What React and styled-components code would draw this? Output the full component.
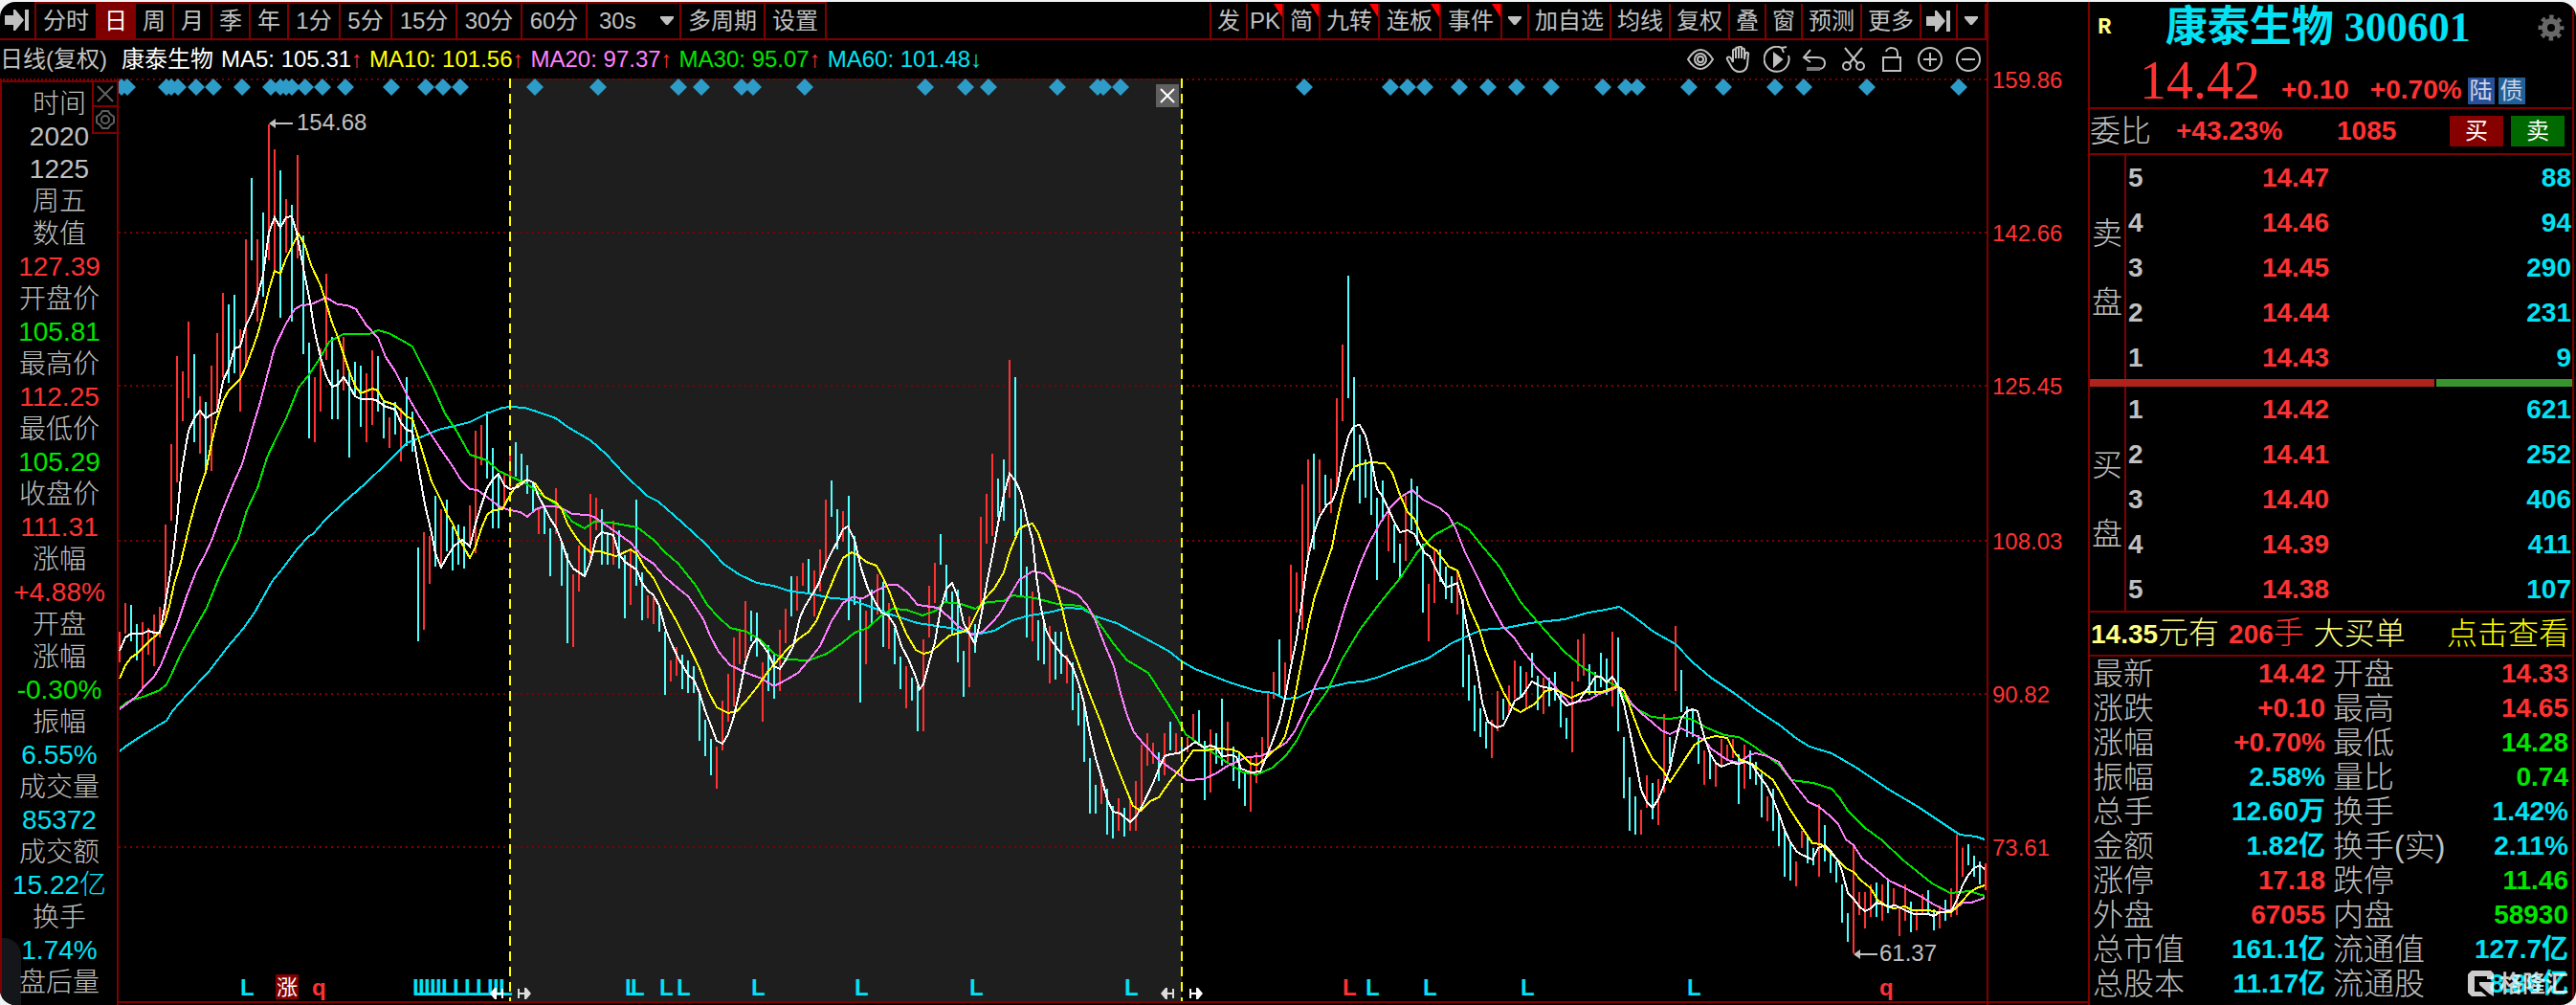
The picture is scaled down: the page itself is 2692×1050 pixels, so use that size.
import React from "react";
import styled, { createGlobalStyle } from "styled-components";

const RED = "#ff3232";
const GREEN = "#00e600";
const CYAN = "#02e2f4";
const SILVER = "#c0c0c0";
const LINE = "#800000";

const leftTools = [
  { label: "分时", w: 64 },
  { label: "日", w: 40, active: true },
  { label: "周", w: 40 },
  { label: "月", w: 40 },
  { label: "季", w: 40 },
  { label: "年", w: 40 },
  { label: "1分", w: 54 },
  { label: "5分", w: 54 },
  { label: "15分", w: 68 },
  { label: "30分", w: 68 },
  { label: "60分", w: 68 },
];

const rightTools = [
  { label: "发", w: 38 },
  { label: "PK", w: 38, mark: true },
  { label: "简", w: 38, mark: true },
  { label: "九转", w: 62, mark: true },
  { label: "连板", w: 64, mark: true },
  { label: "事件", w: 64, mark: true },
  { icon: "down", name: "更多事件", w: 28 },
  { label: "加自选", w: 86 },
  { label: "均线", w: 62 },
  { label: "复权", w: 62 },
  { label: "叠", w: 38 },
  { label: "窗", w: 38 },
  { label: "预测", w: 62 },
  { label: "更多", w: 62 },
  { icon: "end", name: "隐藏", w: 38 },
  { icon: "down", name: "菜单", w: 30 },
];

const averages = [
  { text: "MA5: 105.31", color: "#ffffff", up: true },
  { text: "MA10: 101.56", color: "#ffff00", up: true },
  { text: "MA20: 97.37", color: "#ff80ff", up: true },
  { text: "MA30: 95.07", color: GREEN, up: true },
  { text: "MA60: 101.48", color: CYAN, up: false },
];

const dayInfo = [
  ["时间"],
  ["2020"],
  ["1225"],
  ["周五"],
  ["数值"],
  ["127.39", RED],
  ["开盘价"],
  ["105.81", GREEN],
  ["最高价"],
  ["112.25", RED],
  ["最低价"],
  ["105.29", GREEN],
  ["收盘价"],
  ["111.31", RED],
  ["涨幅"],
  ["+4.88%", RED],
  ["开盘"],
  ["涨幅"],
  ["-0.30%", GREEN],
  ["振幅"],
  ["6.55%", CYAN],
  ["成交量"],
  ["85372", CYAN],
  ["成交额"],
  ["15.22亿", CYAN],
  ["换手"],
  ["1.74%", CYAN],
  ["盘后量"],
];

const sells = [
  ["5", "14.47", "88"],
  ["4", "14.46", "94"],
  ["3", "14.45", "290"],
  ["2", "14.44", "231"],
  ["1", "14.43", "9"],
];

const buys = [
  ["1", "14.42", "621"],
  ["2", "14.41", "252"],
  ["3", "14.40", "406"],
  ["4", "14.39", "411"],
  ["5", "14.38", "107"],
];

const stats = [
  ["最新", "14.42", RED, "开盘", "14.33", RED],
  ["涨跌", "+0.10", RED, "最高", "14.65", RED],
  ["涨幅", "+0.70%", RED, "最低", "14.28", GREEN],
  ["振幅", "2.58%", CYAN, "量比", "0.74", GREEN],
  ["总手", "12.60万", CYAN, "换手", "1.42%", CYAN],
  ["金额", "1.82亿", CYAN, "换手(实)", "2.11%", CYAN],
  ["涨停", "17.18", RED, "跌停", "11.46", GREEN],
  ["外盘", "67055", RED, "内盘", "58930", GREEN],
  ["总市值", "161.1亿", CYAN, "流通值", "127.7亿", CYAN],
  ["总股本", "11.17亿", CYAN, "流通股", "8.86亿", CYAN],
];

const scale = ["159.86", "142.66", "125.45", "108.03", "90.82", "73.61"];

// one entry per bar: r = up, c = down, then top-bottom
const FIRST_X = 125;
const STEP = 6;
const bars = `
r660-692 r630-662 c632-670 c652-690 r650-718 r656-684 r642-696 r634-666 r548-646 r464-544
r372-504 r388-440 r336-416 c370-462 r414-474 c420-490 r382-492 r348-430 r306-394 c318-400
c308-390 r344-430 r250-382 c186-272 r250-336 c222-310 r130-272 r156-282 c178-332 r208-264
c214-336 r162-270 c246-370 c358-458 r394-462 r364-430 r286-376 c352-438 c386-438 r352-408
c386-478 c378-414 c382-446 r390-462 r366-444 c372-430 c420-458 r436-468 c420-454 r426-482
c394-466 c430-472 c572-670 r556-658 r560-610 c518-592 r532-590 c522-576 c550-596 c548-590
c550-594 r528-570 r450-578 r444-486 c430-500 c468-552 c496-552 r496-530 r470-510 c462-498
c474-504 c486-516 c504-534 r532-558 c530-558 c552-602 r510-558 c566-612 c578-672 r600-676
r570-618 c570-602 r516-586 r520-554 c532-590 c556-590 r544-590 c554-594 c580-646 r574-632
c522-612 c598-648 r622-646 r624-652 c632-660 c660-726 r690-712 r676-706 c684-720 c690-724
c696-724 c722-774 c752-790 c772-810 r780-824 r732-784 r704-754 r666-738 r658-694 r628-688
c638-670 c640-686 r692-754 c674-722 c684-730 r658-722 r636-672 c602-644 r602-638 r588-612
c584-620 r596-644 r574-618 r522-594 c502-540 c532-574 r534-566 c518-648 c560-632 c626-734
r638-694 c616-652 r600-642 c608-676 r630-678 c656-694 c686-720 r696-740 c708-732 c716-764
r668-764 r612-666 r588-630 c558-590 c590-630 c618-662 c616-692 c680-728 r644-718 c652-682
r540-636 r516-568 r474-560 c500-540 c480-544 r376-520 c394-560 c532-622 c592-666 r618-670
c648-690 c652-694 r654-714 c660-710 c660-704 r684-714 c692-742 c724-758 c738-796 c792-850
c820-850 r814-840 c824-872 c842-876 r834-868 c844-874 r836-868 r816-868 r778-848 r766-800
r776-798 c786-816 r766-810 c754-784 r766-786 c772-790 r770-786 r746-772 c742-778 c774-836
r762-828 c766-798 c730-800 r754-798 c780-816 c786-824 c808-842 r792-848 r786-818 r770-800
r724-782 r702-730 c668-728 r692-726 r590-690 r598-640 r506-658 r480-580 c474-574 r480-536
c496-528 r500-536 r416-512 r360-440 c288-416 c394-502 c454-526 c480-520 c482-538 c520-606
c502-544 r532-576 c548-588 c568-604 r518-586 c500-554 c508-570 c568-640 r610-670 r574-630
c574-608 c592-626 c602-630 r596-642 c626-718 c684-732 c716-764 c740-770 c754-782 r752-792
r722-764 c730-752 r716-746 r690-730 c696-728 r702-740 c682-708 c706-742 r708-746 c708-738
c702-732 c722-760 c750-772 r712-786 r668-712 r662-706 c694-726 c702-726 c682-718 c688-726
r660-738 c666-764 c770-834 c812-868 c832-872 r846-872 r810-844 c818-856 r814-862 r746-828
c770-798 r654-722 c700-744 c738-770 c740-770 c768-798 r784-820 c788-814 r796-822 r772-800
r778-794 r772-792 c788-840 r778-824 c784-814 c796-820 c808-854 r832-858 c824-868 c852-884
c868-916 c880-920 r900-926 r868-886 c872-902 c886-904 r840-916 c862-900 c890-912 c900-922
c924-964 c954-984 r884-996 r932-956 r932-970 r924-958 c922-958 r924-962 c920-954 r928-946
r948-978 r924-962 c942-974 r952-972 r934-954 c930-954 c950-972 r946-970 c940-962 r928-958
r872-956 r886-916 c882-904 c894-916 c900-924 r902-930`
  .trim()
  .split(/\s+/)
  .map((item, i) => {
    const [top, bottom] = item.slice(1).split("-").map(Number);
    return { up: item[0] === "r", x: FIRST_X + i * STEP, top, bottom };
  });

const lines = [
  {
    color: CYAN,
    points: `125,785 131,780 143,772 167,757 174,753 180,743 196,725 218,702 237,677 254,657 266,640 284,608 296,593
311,573 323,560 327,558 339,544 358,526 382,505 403,485 425,463 437,458 458,449 475,445 491,441 509,432 525,426
533,425 548,426 558,429 581,437 593,446 617,460 633,474 653,496 676,518 688,524 713,546 737,568 756,589 772,600
791,609 808,612 827,618 846,620 869,625 887,626 907,633 931,642 959,651 992,656 1020,663 1039,659 1058,648
1072,644 1100,639 1115,635 1131,636 1145,644 1167,651 1195,666 1221,680 1235,691 1249,699 1267,706 1285,713
1314,722 1331,724 1342,730 1356,729 1374,720 1389,718 1410,713 1424,712 1439,708 1464,698 1492,688 1517,672
1539,662 1549,658 1574,656 1599,651 1635,647 1660,640 1678,637 1692,634 1700,639 1711,647 1728,660 1751,673
1769,692 1788,708 1812,724 1836,742 1859,757 1878,772 1891,780 1914,787 1940,802 1974,825 2003,842 2033,862
2048,872 2065,874 2074,877`,
  },
  {
    color: GREEN,
    points: `125,740 132,734 139,731 150,728 167,721 174,715 179,705 189,683 200,663 216,635 229,603 239,582 249,563
258,533 269,510 279,478 289,457 299,437 312,405 324,390 335,373 344,357 359,349 386,349 395,345 406,348 419,355
431,362 441,382 453,405 465,432 477,450 491,475 509,481 521,492 532,497 551,506 569,519 586,530 598,545 611,552
621,545 638,546 666,551 683,564 695,577 709,589 728,613 739,632 751,645 763,656 780,660 794,668 809,683 822,689
845,690 864,683 881,671 893,661 907,656 921,643 933,636 947,637 964,643 978,638 987,629 1004,631 1019,636
1032,629 1049,628 1058,622 1082,625 1105,631 1129,633 1143,643 1152,656 1164,673 1178,690 1200,703 1216,728
1230,750 1239,767 1253,777 1267,786 1283,797 1299,807 1314,809 1330,802 1344,789 1355,774 1367,750 1387,722
1403,688 1421,658 1442,630 1464,603 1481,577 1499,559 1523,546 1535,553 1546,567 1567,592 1589,629 1614,658
1635,681 1655,698 1674,709 1690,717 1700,732 1711,741 1726,749 1745,751 1757,749 1769,752 1783,760 1802,768
1817,770 1829,777 1847,790 1859,799 1872,815 1895,818 1914,824 1922,833 1931,847 1949,865 1967,878 1988,898
2003,910 2019,923 2038,933 2058,931 2074,936`,
  },
  {
    color: "#ff80ff",
    points: `125,741 137,732 143,727 150,718 161,707 168,695 177,673 186,650 195,623 205,597 214,580 221,565 233,532
245,503 253,485 263,450 272,420 278,397 287,363 299,338 308,323 315,319 325,318 341,311 353,318 363,319 372,323
383,340 395,353 403,373 413,388 425,412 437,433 448,450 461,470 473,487 482,502 491,511 499,512 510,520 523,530
533,533 544,535 551,540 560,532 569,529 581,529 591,533 598,537 614,538 621,540 638,552 659,567 671,581 683,589
695,603 709,615 719,623 728,636 735,647 742,664 751,681 763,695 780,703 796,709 809,717 822,710 834,703 845,690
857,675 869,649 881,630 890,624 902,625 916,617 929,611 938,611 949,620 959,632 980,635 992,645 1001,654
1016,663 1027,660 1039,648 1046,639 1056,621 1065,606 1079,597 1091,599 1103,611 1115,616 1126,621 1136,632
1145,649 1155,675 1164,696 1171,724 1178,748 1185,765 1195,777 1211,794 1228,806 1240,815 1258,814 1271,808
1283,800 1303,791 1317,790 1331,784 1344,776 1353,764 1365,739 1376,713 1389,688 1397,663 1406,633 1421,590
1431,567 1442,547 1453,530 1464,519 1476,512 1487,522 1505,531 1514,539 1521,552 1531,577 1544,603 1556,628
1571,655 1583,667 1590,678 1606,698 1624,716 1640,735 1661,731 1671,725 1681,722 1690,718 1697,722 1705,735
1715,745 1727,755 1736,763 1745,767 1757,761 1767,766 1781,773 1788,782 1805,794 1817,797 1828,789 1835,787
1847,790 1859,796 1867,808 1878,823 1890,838 1901,843 1913,853 1921,861 1929,877 1937,883 1946,897 1960,908
1974,920 1991,928 2008,937 2021,945 2033,951 2043,950 2051,943 2060,943 2074,938`,
  },
  {
    color: "#ffff00",
    points: `125,709 131,695 137,687 143,683 154,672 167,660 173,648 177,633 182,610 189,587 197,553 203,530 209,510
215,493 221,463 227,437 233,419 239,408 251,396 257,383 263,367 269,350 275,328 281,303 287,283 293,286 299,270
305,258 312,244 319,257 325,277 335,298 341,317 347,337 353,352 359,370 365,388 371,403 377,411 389,406 395,408
401,419 413,423 425,435 431,438 437,457 444,480 451,503 461,523 467,537 473,547 480,563 491,583 497,571 503,552
509,538 515,533 525,532 533,517 541,506 551,501 559,505 569,519 581,525 587,532 593,547 599,557 607,568 617,577
626,576 644,581 659,574 666,579 673,592 683,604 695,628 707,649 719,673 731,698 740,722 749,739 761,745 770,743
779,733 791,718 803,701 822,679 834,668 845,660 853,649 860,632 867,615 874,598 881,583 890,577 898,581 905,587
916,591 923,604 929,617 938,641 947,662 957,679 965,683 973,681 982,673 992,664 1007,660 1013,656 1019,644
1027,628 1039,615 1049,598 1055,577 1065,553 1071,549 1079,547 1085,557 1093,581 1103,611 1110,636 1117,666
1128,696 1139,726 1151,756 1163,790 1175,820 1184,842 1192,847 1202,837 1211,833 1223,816 1235,801 1247,784
1260,784 1272,782 1287,783 1295,786 1307,798 1314,799 1324,791 1337,779 1343,769 1347,754 1353,729 1357,708
1362,683 1367,653 1374,623 1383,598 1392,572 1397,545 1403,519 1409,499 1415,488 1422,485 1433,483 1447,484
1455,494 1463,517 1471,535 1478,542 1487,562 1494,570 1501,575 1514,592 1523,596 1529,613 1535,633 1546,658
1553,681 1562,703 1571,723 1580,739 1589,744 1603,736 1615,722 1624,720 1642,729 1655,723 1674,723 1690,717
1697,721 1705,743 1715,770 1727,793 1738,805 1745,817 1752,807 1761,793 1771,778 1781,772 1793,769 1805,771
1812,785 1819,794 1831,798 1841,806 1853,815 1860,827 1869,843 1878,857 1888,872 1894,881 1903,882 1915,893
1929,907 1937,911 1945,920 1955,928 1962,940 1972,947 1979,949 1991,947 1998,951 2015,951 2026,953 2039,953
2045,947 2051,941 2058,933 2065,928 2074,925`,
  },
  {
    color: "#ffffff",
    points: `125,680 131,666 137,662 149,662 155,659 161,661 167,661 171,640 174,623 179,593 181,578 185,544 189,497
193,473 197,450 203,437 209,429 215,437 221,433 227,430 233,398 239,385 245,364 251,362 257,340 263,328 269,310
275,287 281,243 287,227 293,238 299,227 305,226 310,243 317,280 323,310 329,347 335,373 341,393 347,404 353,402
359,394 365,403 371,414 377,417 389,417 395,419 401,424 413,428 419,442 425,449 431,451 437,487 444,527 451,557
455,578 461,593 468,580 475,570 483,564 491,571 497,547 503,528 509,510 515,501 521,495 527,507 533,511 541,509
551,501 557,504 563,519 569,530 575,542 581,551 587,566 593,584 599,594 605,598 611,602 617,587 623,562 629,556
641,559 647,579 653,587 665,595 671,609 677,617 683,622 689,633 695,656 701,671 709,688 719,705 725,710 731,724
737,743 743,758 749,774 755,777 761,767 767,748 773,722 779,692 785,675 791,667 798,675 803,683 809,696 815,699
822,688 829,675 836,645 841,634 847,624 855,611 863,589 869,577 876,564 881,553 886,550 893,564 900,594 907,615
914,628 921,640 928,643 935,653 942,675 949,688 957,707 961,720 965,715 971,692 977,671 983,636 989,615 995,609
1001,624 1007,651 1013,662 1019,673 1025,645 1031,611 1037,581 1043,547 1049,517 1055,495 1061,502 1067,515
1073,542 1079,564 1083,602 1088,636 1093,658 1098,668 1109,683 1115,688 1121,697 1127,713 1133,735 1139,767
1145,792 1151,812 1157,835 1163,848 1171,850 1181,859 1188,852 1195,839 1205,818 1211,803 1217,790 1223,788
1232,787 1241,781 1249,775 1258,781 1265,779 1271,781 1277,790 1287,789 1292,791 1297,803 1307,807 1317,806
1324,789 1330,774 1337,754 1343,729 1349,696 1355,668 1360,633 1367,582 1373,557 1379,540 1387,527 1392,524
1397,512 1403,479 1409,456 1415,445 1421,444 1427,455 1433,479 1439,511 1445,519 1451,532 1457,545 1463,556
1471,554 1478,558 1483,567 1489,578 1494,581 1501,595 1511,614 1523,609 1528,628 1533,655 1539,678 1544,703
1549,734 1555,754 1564,760 1571,758 1577,746 1583,732 1590,728 1601,712 1610,717 1624,720 1631,731 1637,737
1644,735 1650,732 1655,725 1661,717 1667,707 1673,707 1679,713 1685,707 1691,717 1697,735 1703,763 1709,793
1715,825 1721,838 1727,844 1733,835 1739,820 1745,803 1751,775 1757,750 1763,743 1769,741 1774,743 1781,770
1787,787 1793,797 1799,801 1809,797 1817,798 1824,796 1831,799 1836,807 1841,814 1847,822 1853,835 1859,850
1865,867 1871,880 1878,890 1883,893 1894,898 1900,886 1907,883 1913,889 1921,900 1925,910 1931,933 1937,939
1943,947 1949,952 1955,949 1961,943 1974,947 1981,946 1991,951 2000,955 2015,955 2021,957 2027,953 2039,952
2045,940 2051,925 2057,914 2063,907 2069,904 2074,908`,
  },
];

const diamonds = [
  127, 133, 174, 179, 186, 205, 223, 253, 283, 293, 299, 305, 319, 337, 361, 409, 445, 463, 481, 559, 625, 709,
  733, 775, 787, 841, 967, 1009, 1033, 1105, 1147, 1153, 1171, 1363, 1453, 1471, 1489, 1525, 1555, 1585, 1621,
  1675, 1699, 1711, 1765, 1801, 1855, 1885, 1951, 2047,
];

const marks = [
  251, 431, 437, 443, 449, 455, 461, 473, 485, 497, 509, 515, 521, 653, 659, 689, 707, 785, 893, 1013, 1175, 1427,
  1487, 1589, 1763,
];

const gridY = [83, 243, 403, 565, 725, 885];

const DownIcon = () => (
  <svg width="14" height="10" viewBox="0 0 14 10" fill={SILVER}>
    <path d="M0 0h14v2L8 9H6L0 2z" />
  </svg>
);

const EndIcon = () => (
  <svg width="26" height="24" viewBox="0 0 26 24" fill={SILVER}>
    <path d="M0 7h9V1h2l9 11-9 11H9v-6H0zM21 1h4v22h-4z" />
  </svg>
);

const GearIcon = ({ size, color }) => (
  <svg width={size} height={size} viewBox="0 0 28 28" fill="none" stroke={color}>
    <circle cx="14" cy="14" r="7" strokeWidth="6" />
    <circle cx="14" cy="14" r="11" strokeWidth="5" strokeDasharray="4.32 4.32" strokeDashoffset="2.16" />
  </svg>
);

const chartTools = [
  {
    name: "显示",
    draw: (
      <>
        <path d="M1 14C6 6 10 4 14 4s8 2 13 10c-5 8-9 10-13 10S6 22 1 14z" />
        <circle cx="14" cy="14" r="6" />
        <circle cx="14" cy="14" r="3" />
      </>
    ),
  },
  {
    name: "平移",
    draw: (
      <path d="M8 17V5c0-2 3-2 3 0v8V3c0-2 3-2 3 0v10V2c0-2 3-2 3 0v11V4c0-2 3-2 3 0v10l1-6c1-2 4-1 3 1l-1 11c-1 5-4 7-8 7-5 0-7-2-9-6L2 14c-1-2 2-4 4-1l2 4" />
    ),
  },
  {
    name: "回放",
    draw: (
      <>
        <path d="M26 10a13 13 0 1 1-7-8M24 1l-5 1 2 5" />
        <path d="M11 8l8 6-8 7z" fill="currentColor" />
      </>
    ),
  },
  {
    name: "撤销",
    draw: (
      <>
        <path d="M9 4L2 12l7 5M2 12h14c6 0 8 3 8 6 0 4-3 6-6 6" />
        <path d="M5 24h14" stroke="#777" strokeWidth="4" />
      </>
    ),
  },
  {
    name: "剪切",
    draw: (
      <>
        <path d="M5 2l14 17M23 2L9 19" />
        <circle cx="7" cy="21" r="4" />
        <circle cx="21" cy="21" r="4" />
      </>
    ),
  },
  {
    name: "锁定",
    draw: <path d="M5 12h18v14H5zM8 6c1-5 12-6 12 2v4" />,
  },
  {
    name: "放大",
    draw: (
      <>
        <circle cx="14" cy="14" r="12" />
        <path d="M14 7v14M7 14h14" />
      </>
    ),
  },
  {
    name: "缩小",
    draw: (
      <>
        <circle cx="14" cy="14" r="12" />
        <path d="M7 14h14" />
      </>
    ),
  },
];

const Tool = ({ item }) => (
  <ToolButton $w={item.w} $active={item.active} aria-label={item.name}>
    {item.label}
    {item.icon === "down" && <DownIcon />}
    {item.icon === "end" && <EndIcon />}
    {item.mark && <Corner />}
  </ToolButton>
);

const RangeHandle = ({ x, flip, color }) => (
  <path
    d={flip ? `M${x} 1033v10h2v-4h5v5h2l5-6-5-6h-2v5h-5v-4z` : `M${x} 1033v10h-2v-4h-5v5h-2l-5-6 5-6h2v5h5v-4z`}
    fill={color}
  />
);

const Chart = () => (
  <ChartSvg viewBox="124 82 1952 964">
    <rect x="533" y="82" width="702" height="964" fill="#1e1e1e" />
    {gridY.map((y) => (
      <line key={y} x1="124" x2="2076" y1={y} y2={y} stroke={LINE} strokeWidth="2" strokeDasharray="2 4" />
    ))}
    <g shapeRendering="crispEdges">
      {bars.map((bar) => (
        <rect
          key={bar.x}
          x={bar.x - 1}
          y={bar.top}
          width="2"
          height={bar.bottom - bar.top}
          fill={bar.up ? RED : "#54ffff"}
        />
      ))}
      {lines.map((line) => (
        <polyline key={line.color} points={line.points} fill="none" stroke={line.color} strokeWidth="2" />
      ))}
      {[533, 1235].map((x) => (
        <line key={x} x1={x} x2={x} y1="82" y2="1046" stroke="#ffff00" strokeWidth="2" strokeDasharray="10 6" />
      ))}
    </g>
    {diamonds.map((x) => (
      <path key={x} d={`M${x} 82l9 9-9 9-9-9z`} fill="#2e9cc8" />
    ))}
    <g fill={SILVER} fontSize="24">
      <path d="M281 129l7-5v4h18v2h-18v4z" />
      <text x="310" y="136">
        154.68
      </text>
      <path d="M1937 997l7-5v4h18v2h-18v4z" />
      <text x="1964" y="1004">
        61.37
      </text>
    </g>
    <g fill={CYAN} fontSize="24" fontWeight="700">
      {marks.map((x) => (
        <text key={x} x={x} y="1040">
          L
        </text>
      ))}
    </g>
    <g fill={RED} fontSize="24" fontWeight="700">
      <text x="1403" y="1040">
        L
      </text>
      <text x="326" y="1040">
        q
      </text>
      <text x="1964" y="1040">
        q
      </text>
    </g>
    <rect x="288" y="1018" width="24" height="26" fill={LINE} />
    <text x="289" y="1039" fontSize="22" fill="#fff">
      涨
    </text>
    <RangeHandle x={526} color="#fff" />
    <RangeHandle x={541} flip color="#ddd" />
    <RangeHandle x={1227} color="#ddd" />
    <RangeHandle x={1243} flip color="#fff" />
    <g>
      <rect x="1208" y="88" width="24" height="24" fill="#606060" />
      <path d="M1213 93l14 14M1227 93l-14 14" stroke="#fff" strokeWidth="2" />
    </g>
  </ChartSvg>
);

const OrderBook = ({ title, rows }) => (
  <Book>
    <BookSide>
      {title.split("").map((ch) => (
        <span key={ch}>{ch}</span>
      ))}
    </BookSide>
    <BookTable>
      <tbody>
        {rows.map(([level, price, amount]) => (
          <tr key={level}>
            <LevelCell>{level}</LevelCell>
            <PriceCell>{price}</PriceCell>
            <AmountCell>{amount}</AmountCell>
          </tr>
        ))}
      </tbody>
    </BookTable>
  </Book>
);

const App = () => {
  return (
    <Window>
      <GlobalStyle />
      <Main>
        <Toolbar>
          <StartButton aria-label="展开">
            <EndIcon />
          </StartButton>
          <ToolGroup $top>
            {leftTools.map((item) => (
              <Tool key={item.label} item={item} />
            ))}
            <PeriodBox>
              <PeriodSelect aria-label="周期" defaultValue="30s">
                <option>30s</option>
                <option>60s</option>
              </PeriodSelect>
              <DownIcon />
            </PeriodBox>
            <Tool item={{ label: "多周期", w: 88 }} />
            <Tool item={{ label: "设置", w: 64 }} />
          </ToolGroup>
          <Spacer />
          <ToolGroup>
            {rightTools.map((item) => (
              <Tool key={item.label || item.name} item={item} />
            ))}
          </ToolGroup>
        </Toolbar>

        <Legend>
          <LegendPeriod>日线(复权)</LegendPeriod>
          <LegendName>康泰生物</LegendName>
          {averages.map((item) => (
            <Average key={item.text} $color={item.color}>
              {item.text}
              <Arrow $up={item.up}>{item.up ? "↑" : "↓"}</Arrow>
            </Average>
          ))}
          <Spacer />
          <ChartTools>
            {chartTools.map((tool) => (
              <IconButton key={tool.name} aria-label={tool.name}>
                <svg width="28" height="28" viewBox="0 0 28 28" fill="none" stroke="currentColor" strokeWidth="2">
                  {tool.draw}
                </svg>
              </IconButton>
            ))}
          </ChartTools>
        </Legend>

        <Body>
          <DayColumn>
            <DayPanel>
              <DayButtons>
                <SmallButton aria-label="关闭">
                  <svg width="18" height="18" viewBox="0 0 18 18" stroke="#606060" strokeWidth="2">
                    <path d="M1 1l16 16M17 1L1 17" />
                  </svg>
                </SmallButton>
                <SmallButton aria-label="设置">
                  <svg width="20" height="20" viewBox="0 0 20 20" fill="none" stroke="#606060" strokeWidth="2">
                    <path d="M7 1h6l2 3 4 3v6l-4 3-2 3H7l-2-3-4-3V7l4-3z" />
                    <circle cx="10" cy="10" r="4" />
                  </svg>
                </SmallButton>
              </DayButtons>
              {dayInfo.map(([text, color], i) => (
                <DayLine key={i} $color={color}>
                  {text}
                </DayLine>
              ))}
            </DayPanel>
            <Handle />
          </DayColumn>
          <Chart />
        </Body>
      </Main>

      <Scale>
        {scale.map((value) => (
          <span key={value}>{value}</span>
        ))}
      </Scale>

      <Quote>
        <QuoteHead>
          <TitleRow>
            <MarginFlag>R</MarginFlag>
            <StockName>康泰生物 300601</StockName>
            <GearButton aria-label="面板设置">
              <GearIcon size={28} color="#686868" />
            </GearButton>
          </TitleRow>
          <PriceRow>
            <LastPrice>14.42</LastPrice>
            <Change>+0.10</Change>
            <Change>+0.70%</Change>
            <Badges>
              <Badge $bg="#27509a">陆</Badge>
              <Badge $bg="#1f6199">债</Badge>
            </Badges>
          </PriceRow>
        </QuoteHead>

        <RatioRow>
          <RatioLabel>委比</RatioLabel>
          <RatioValue>+43.23%</RatioValue>
          <RatioDiff>1085</RatioDiff>
          <TradeButton $bg="#860000">买</TradeButton>
          <TradeButton $bg="#006a00">卖</TradeButton>
        </RatioRow>

        <OrderBook title="卖盘" rows={sells} />
        <Strength>
          <StrengthPart $color="#b0221c" $grow={360} />
          <StrengthPart $color="#38942c" $grow={142} />
        </Strength>
        <OrderBook title="买盘" rows={buys} />

        <Notice>
          <NoticeText>
            <b>14.35</b>元有
          </NoticeText>
          <NoticeText $color={RED}>
            <b>206</b>手
          </NoticeText>
          <NoticeText>大买单</NoticeText>
          <NoticeLink href="#detail">点击查看</NoticeLink>
        </Notice>

        <StatTable>
          <colgroup>
            <col width="98" />
            <col width="153" />
            <col width="122" />
            <col />
          </colgroup>
          <tbody>
            {stats.map((row) => (
              <tr key={row[0]}>
                <StatLabel>{row[0]}</StatLabel>
                <StatValue $color={row[2]}>{row[1]}</StatValue>
                <StatLabel>{row[3]}</StatLabel>
                <StatValue $color={row[5]}>{row[4]}</StatValue>
              </tr>
            ))}
          </tbody>
        </StatTable>
      </Quote>

      <Watermark>
        <svg width="28" height="28" viewBox="0 0 28 28" fill="#fff">
          <path d="M4 0h20l3 3v6h-7V6H7v16h7l6 5H4l-4-4V4z" />
          <path d="M12 12h15v15l-5-3-10-9z" />
        </svg>
        格隆汇
      </Watermark>
    </Window>
  );
};

export default App;

const GlobalStyle = createGlobalStyle`
  * {
    box-sizing: border-box;
  }
  body {
    margin: 0;
    background: #f2f3f5;
    font-family: "Liberation Sans", "Noto Sans CJK SC", sans-serif;
    font-size: 24px;
    line-height: 28px;
    color: ${SILVER};
  }
  button {
    padding: 0;
    border: 0;
    background: none;
    font: inherit;
    color: inherit;
    cursor: pointer;
  }
  svg {
    flex: none;
  }
`;

const Window = styled.div`
  position: relative;
  display: flex;
  min-height: calc(100vh - 2px);
  margin-top: 2px;
  padding-right: 2px;
  border-radius: 16px;
  overflow: hidden;
  background: #000;
`;

const Main = styled.div`
  flex: 1;
  min-width: 0;
  border-right: 2px solid ${LINE};
`;

const Toolbar = styled.div`
  display: flex;
  height: 40px;
  border-bottom: 2px solid ${LINE};
`;

const StartButton = styled.button`
  width: 36px;
  display: flex;
  align-items: center;
  justify-content: center;
`;

const ToolGroup = styled.div`
  display: flex;
  border-left: 2px solid ${LINE};
  border-top: 2px solid ${(props) => (props.$top ? LINE : "transparent")};
`;

const ToolButton = styled.button`
  position: relative;
  display: flex;
  align-items: center;
  justify-content: center;
  width: ${(props) => props.$w}px;
  border-right: 2px solid ${LINE};
  background: ${(props) => (props.$active ? LINE : "none")};
  color: ${(props) => (props.$active ? "#fff" : SILVER)};
  white-space: nowrap;
`;

const Corner = styled.span`
  position: absolute;
  top: 0;
  right: 0;
  border-top: 14px solid #ff0000;
  border-left: 9px solid transparent;
`;

const PeriodBox = styled.div`
  display: flex;
  align-items: center;
  justify-content: space-between;
  width: 98px;
  padding: 0 6px 0 12px;
  border-right: 2px solid ${LINE};
`;

const PeriodSelect = styled.select`
  appearance: none;
  padding: 0;
  border: 0;
  background: none;
  font: inherit;
  color: inherit;
`;

const Spacer = styled.div`
  flex: 1;
`;

const Legend = styled.div`
  display: flex;
  align-items: center;
  height: 40px;
  white-space: nowrap;
`;

const LegendPeriod = styled.span`
  margin-right: 15px;
`;

const LegendName = styled.span`
  margin-right: 8px;
  color: #fff;
`;

const Average = styled.span`
  margin-right: 7px;
  color: ${(props) => props.$color};
`;

const Arrow = styled.span`
  color: ${(props) => (props.$up ? RED : CYAN)};
`;

const ChartTools = styled.div`
  display: flex;
  gap: 12px;
  padding-right: 5px;
`;

const IconButton = styled.button`
  display: flex;
`;

const Body = styled.div`
  display: flex;
  align-items: flex-start;
`;

const DayColumn = styled.div`
  position: relative;
  width: 124px;
  flex: none;
  align-self: stretch;
  border-top: 2px dotted ${LINE};
`;

const DayPanel = styled.div`
  position: relative;
  z-index: 1;
  height: 100%;
  padding: 6px 0;
  border: 2px solid ${LINE};
  border-bottom: 0;
`;

const DayLine = styled.div`
  font-size: 28px;
  font-weight: 300;
  line-height: 34px;
  text-align: center;
  color: ${(props) => props.$color || SILVER};
`;

const DayButtons = styled.div`
  position: absolute;
  top: -2px;
  right: -2px;
`;

const SmallButton = styled.button`
  display: flex;
  align-items: center;
  justify-content: center;
  width: 28px;
  height: 28px;
  border: 2px solid ${LINE};
  & + & {
    border-top: 0;
  }
`;

const Handle = styled.div`
  position: absolute;
  left: 2px;
  bottom: 0;
  width: 20px;
  height: 70px;
  border-top-right-radius: 18px;
  background: #15161a;
`;

const ChartSvg = styled.svg`
  display: block;
  flex: 1;
  min-width: 0;
  box-sizing: content-box;
  border-bottom: 2px solid ${LINE};
  font-family: "Liberation Sans", "Noto Sans CJK SC", sans-serif;
`;

const Scale = styled.div`
  display: grid;
  grid-template-rows: 160px 160px 162px 160px 160px;
  align-content: start;
  width: 104px;
  height: 1046px;
  padding: 68px 0 0 4px;
  border-bottom: 2px solid ${LINE};
  color: ${RED};
`;

const Quote = styled.div`
  width: 508px;
  border-left: 2px solid ${LINE};
  border-right: 2px solid ${LINE};
  white-space: nowrap;
`;

const QuoteHead = styled.div`
  height: 112px;
  border-bottom: 2px solid ${LINE};
`;

const TitleRow = styled.div`
  display: flex;
  align-items: center;
  justify-content: space-between;
  height: 54px;
  padding: 0 8px;
`;

const MarginFlag = styled.span`
  font-family: "Liberation Mono", monospace;
  font-weight: 700;
  color: #ffff80;
`;

const StockName = styled.h1`
  margin: 0 14px 0 0;
  font-family: "Liberation Serif", "Noto Sans CJK SC", serif;
  font-size: 44px;
  font-weight: 700;
  line-height: 54px;
  color: ${CYAN};
`;

const GearButton = styled.button`
  display: flex;
`;

const PriceRow = styled.div`
  display: flex;
  align-items: baseline;
  gap: 22px;
  padding-left: 52px;
  color: ${RED};
`;

const LastPrice = styled.span`
  font-family: "Liberation Serif", serif;
  font-size: 56px;
  line-height: 56px;
`;

const Change = styled.span`
  font-size: 28px;
  font-weight: 700;
`;

const Badges = styled.span`
  display: flex;
  gap: 4px;
  margin-left: -16px;
`;

const Badge = styled.span`
  width: 28px;
  height: 28px;
  font-size: 24px;
  line-height: 28px;
  text-align: center;
  color: #d0d4e4;
  background: ${(props) => props.$bg};
`;

const RatioRow = styled.div`
  display: flex;
  align-items: center;
  height: 48px;
  padding-right: 8px;
  border-bottom: 2px solid ${LINE};
  font-size: 28px;
  font-weight: 700;
  color: ${RED};
`;

const RatioLabel = styled.span`
  width: 90px;
  font-size: 32px;
  font-weight: 300;
  color: ${SILVER};
`;

const RatioValue = styled.span`
  width: 168px;
`;

const RatioDiff = styled.span`
  flex: 1;
`;

const TradeButton = styled.button`
  width: 56px;
  height: 32px;
  margin-left: 8px;
  font-size: 24px;
  font-weight: 400;
  color: #fff;
  background: ${(props) => props.$bg};
`;

const Book = styled.div`
  display: flex;
  height: 234px;
`;

const BookSide = styled.div`
  display: flex;
  flex-direction: column;
  justify-content: center;
  align-items: center;
  gap: 40px;
  width: 38px;
  padding-top: 2px;
  border-right: 2px solid ${LINE};
  font-size: 32px;
  font-weight: 300;
  line-height: 32px;
`;

const BookTable = styled.table`
  flex: 1;
  height: 234px;
  border-collapse: collapse;
  table-layout: fixed;
  font-size: 28px;
  font-weight: 700;
  td {
    padding: 2px 0 0;
  }
`;

const LevelCell = styled.td`
  width: 60px;
  && {
    padding-left: 2px;
  }
`;

const PriceCell = styled.td`
  width: 152px;
  text-align: right;
  color: ${RED};
`;

const AmountCell = styled.td`
  text-align: right;
  color: ${CYAN};
  && {
    padding-right: 1px;
  }
`;

const Strength = styled.div`
  display: flex;
  gap: 2px;
  height: 8px;
`;

const StrengthPart = styled.div`
  flex: ${(props) => props.$grow};
  background: ${(props) => props.$color};
`;

const Notice = styled.div`
  display: flex;
  align-items: center;
  gap: 10px;
  height: 48px;
  padding: 0 3px 0 1px;
  border-top: 2px solid ${LINE};
  border-bottom: 2px solid ${LINE};
  font-size: 32px;
  line-height: 40px;
`;

const NoticeText = styled.span`
  color: ${(props) => props.$color || "#ffff80"};
  font-weight: 300;
  b {
    font-size: 28px;
    font-weight: 700;
  }
`;

const NoticeLink = styled.a`
  margin-left: auto;
  font-weight: 300;
  color: #ffff00;
  text-decoration: none;
`;

const StatTable = styled.table`
  width: 100%;
  padding: 0 4px 0 3px;
  border-spacing: 0;
  table-layout: fixed;
  line-height: 36px;
  td {
    height: 36px;
    padding: 0;
  }
`;

const StatLabel = styled.td`
  font-size: 32px;
  font-weight: 300;
`;

const StatValue = styled.td`
  font-size: 28px;
  font-weight: 700;
  text-align: right;
  color: ${(props) => props.$color};
  td&:nth-child(2) {
    padding-right: 8px;
  }
`;

const Watermark = styled.div`
  position: absolute;
  right: 8px;
  bottom: 8px;
  display: flex;
  align-items: center;
  gap: 5px;
  font-weight: 700;
  color: #fff;
  opacity: 0.8;
`;
